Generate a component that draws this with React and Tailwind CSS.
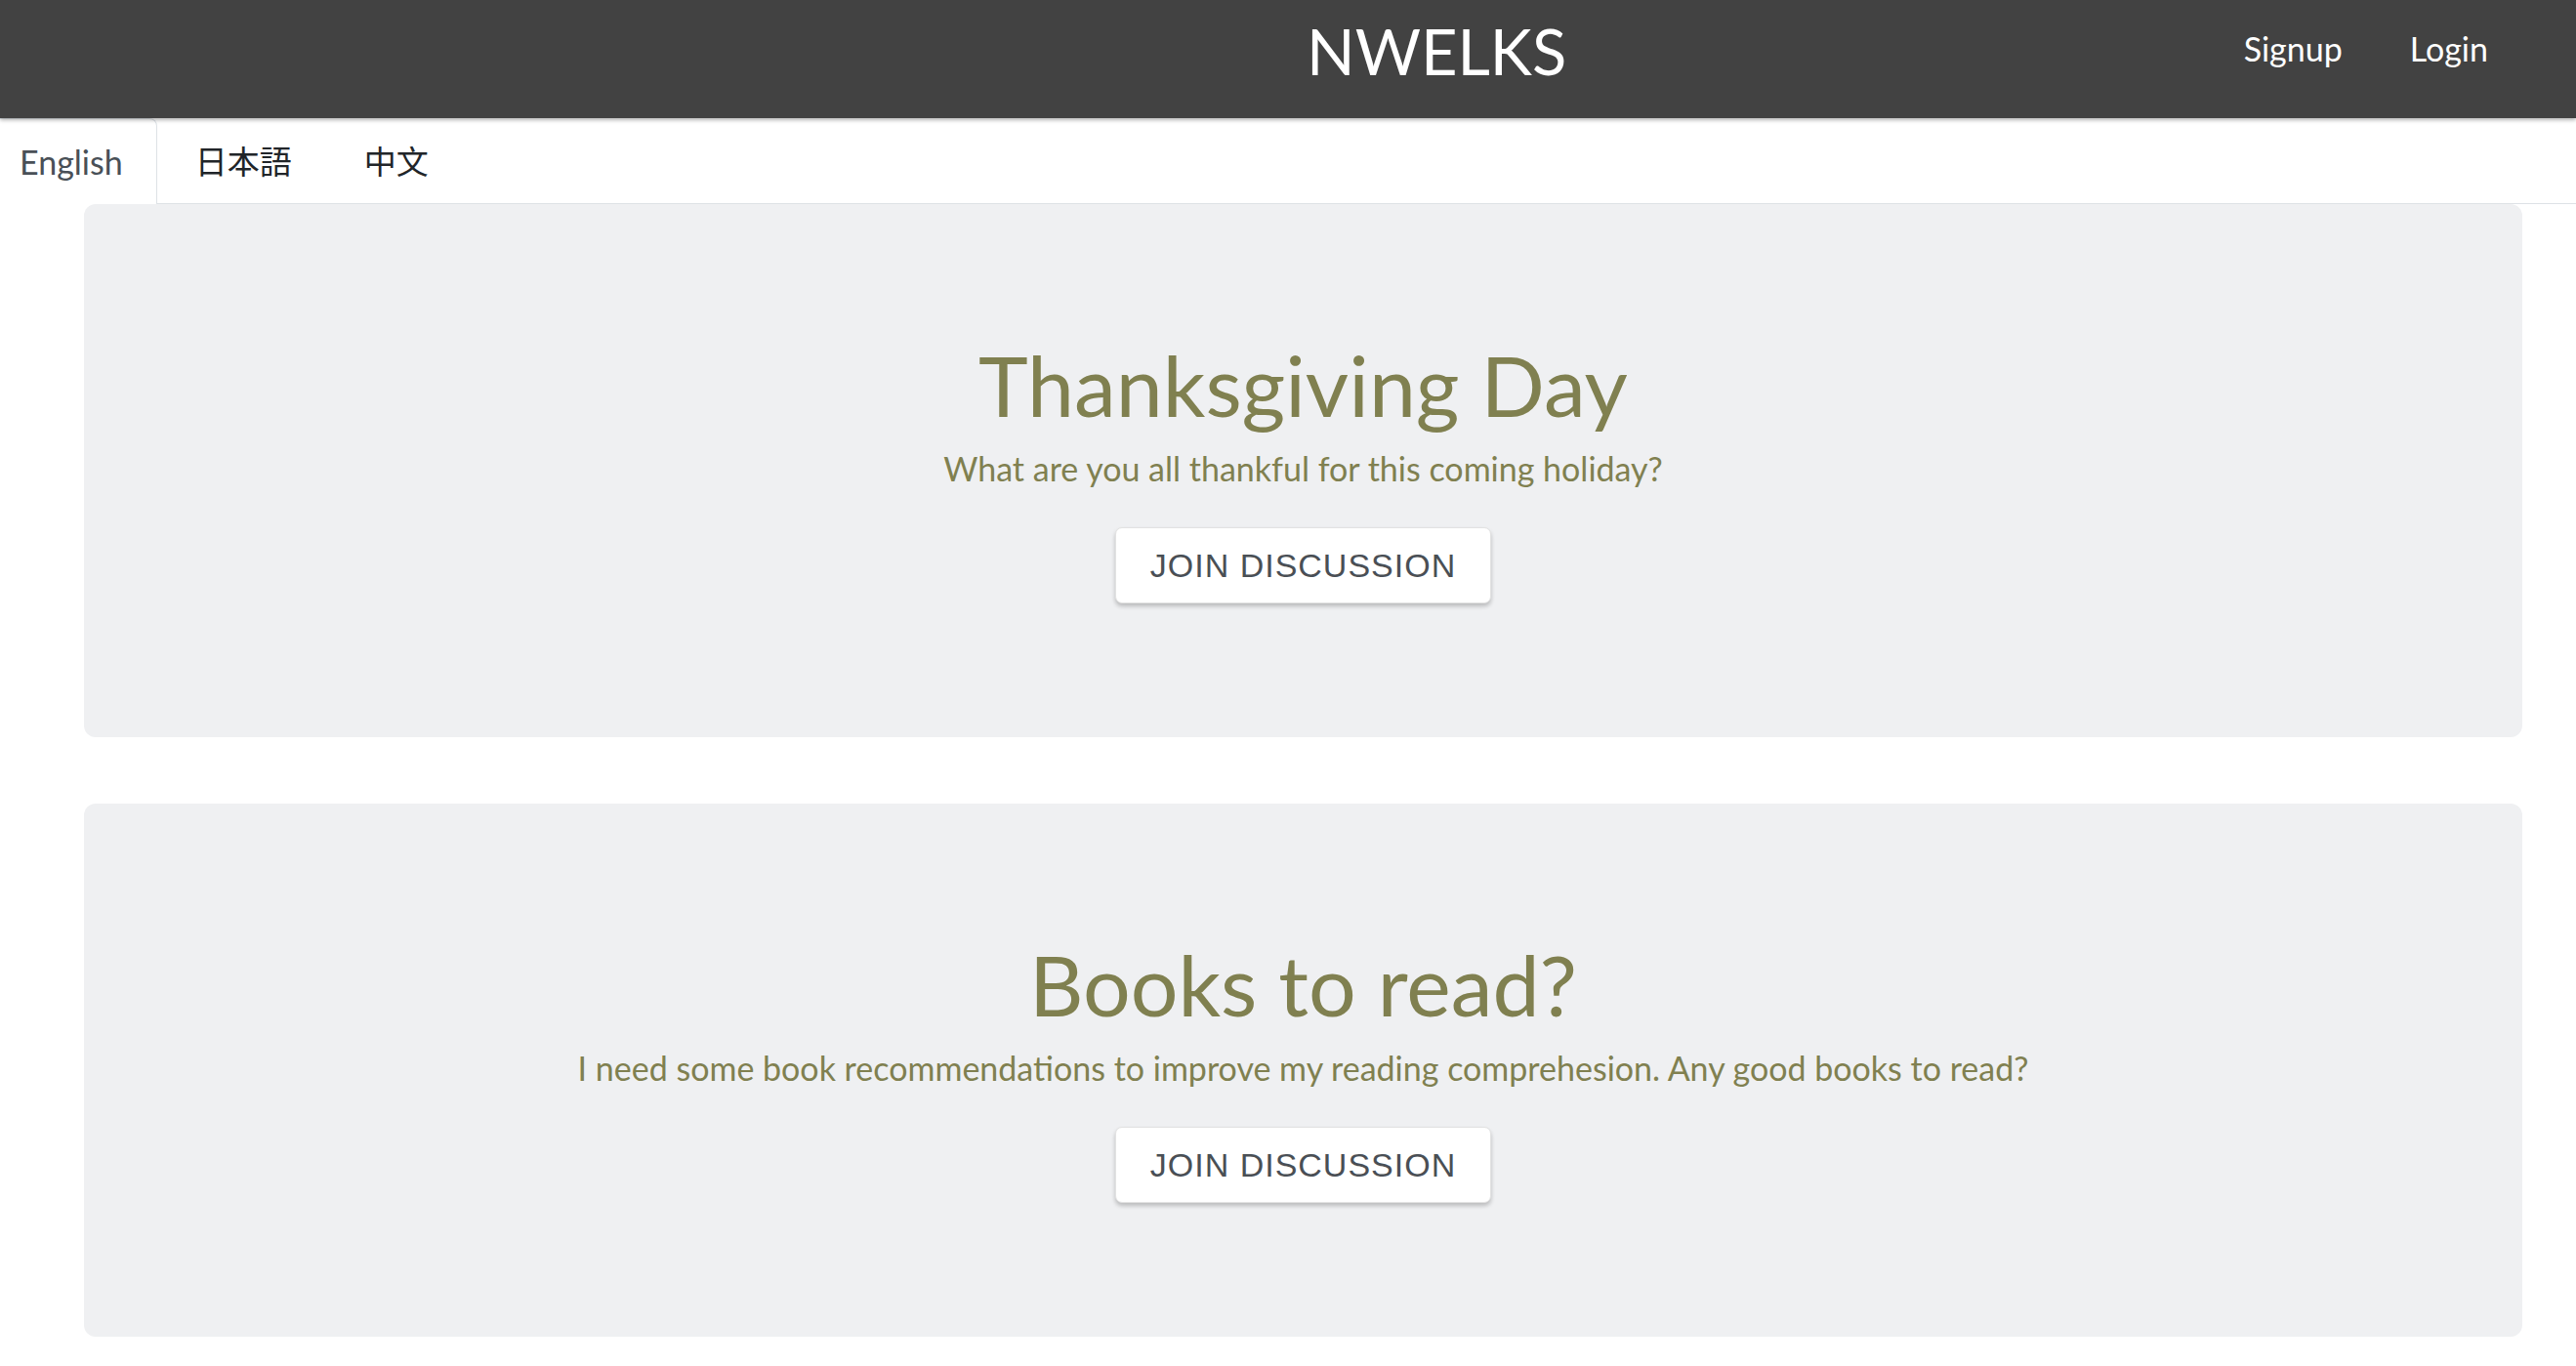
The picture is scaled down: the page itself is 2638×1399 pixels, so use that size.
import React from "react";

const sans = { fontFamily: '"Lato", "Noto Sans CJK JP", sans-serif' };

function Card({ title, text }) {
  return (
    <div className="h-[546px] rounded-[12px] bg-[#eff0f2] flex flex-col items-center pt-[142px]">
      <h1 className="text-[86px] leading-none font-normal text-[#808050] font-['Lato',sans-serif]">
        {title}
      </h1>
      <p className="mt-[26px] text-[34px] leading-none text-[#808050] font-['Lato',sans-serif]">
        {text}
      </p>
      <button className="mt-[43px] h-[78px] px-[35px] bg-white rounded-[7px] border border-[#e2e2e2] shadow-[0_3px_4px_rgba(0,0,0,0.22)] text-[34px] tracking-[1px] text-[#4a4f55] font-['Liberation_Sans',Arial,sans-serif] uppercase">
        Join Discussion
      </button>
    </div>
  );
}

export default function App() {
  return (
    <div className="min-h-[1399px] bg-white" style={sans}>
      <header className="relative z-10 h-[121px] bg-[#424242] flex items-start shadow-[0_2px_4px_rgba(0,0,0,0.3)]">
        <div className="ml-[1338px] mt-[20px] text-[65px] leading-none text-white font-['Lato',sans-serif]">
          NWELKS
        </div>
        <nav className="ml-auto mr-[90px] mt-[33px] flex gap-[69px] text-[34px] leading-none text-white font-['Lato',sans-serif]">
          <a>Signup</a>
          <a>Login</a>
        </nav>
      </header>
      <div className="h-[88px] flex border-b border-[#dee2e6]">
        <div className="h-[88px] -mb-px bg-white border-t border-r border-[#dee2e6] rounded-tr-[8px] pl-[20px] pr-[34px] pt-[27px] text-[34px] leading-none text-[#495057] font-['Lato',sans-serif]">
          English
        </div>
        <div className="ml-[2px] px-[37px] pt-[27px] text-[33px] leading-none text-[#212529] font-['Noto_Sans_CJK_JP',sans-serif]">
          日本語
        </div>
        <div className="px-[37px] pt-[27px] text-[33px] leading-none text-[#212529] font-['Noto_Sans_CJK_SC',sans-serif]">
          中文
        </div>
      </div>
      <main className="pl-[86px] pr-[55px] flex flex-col gap-[68px] pb-[30px]">
        <Card title="Thanksgiving Day" text="What are you all thankful for this coming holiday?" />
        <Card
          title="Books to read?"
          text="I need some book recommendations to improve my reading comprehesion. Any good books to read?"
        />
      </main>
    </div>
  );
}
